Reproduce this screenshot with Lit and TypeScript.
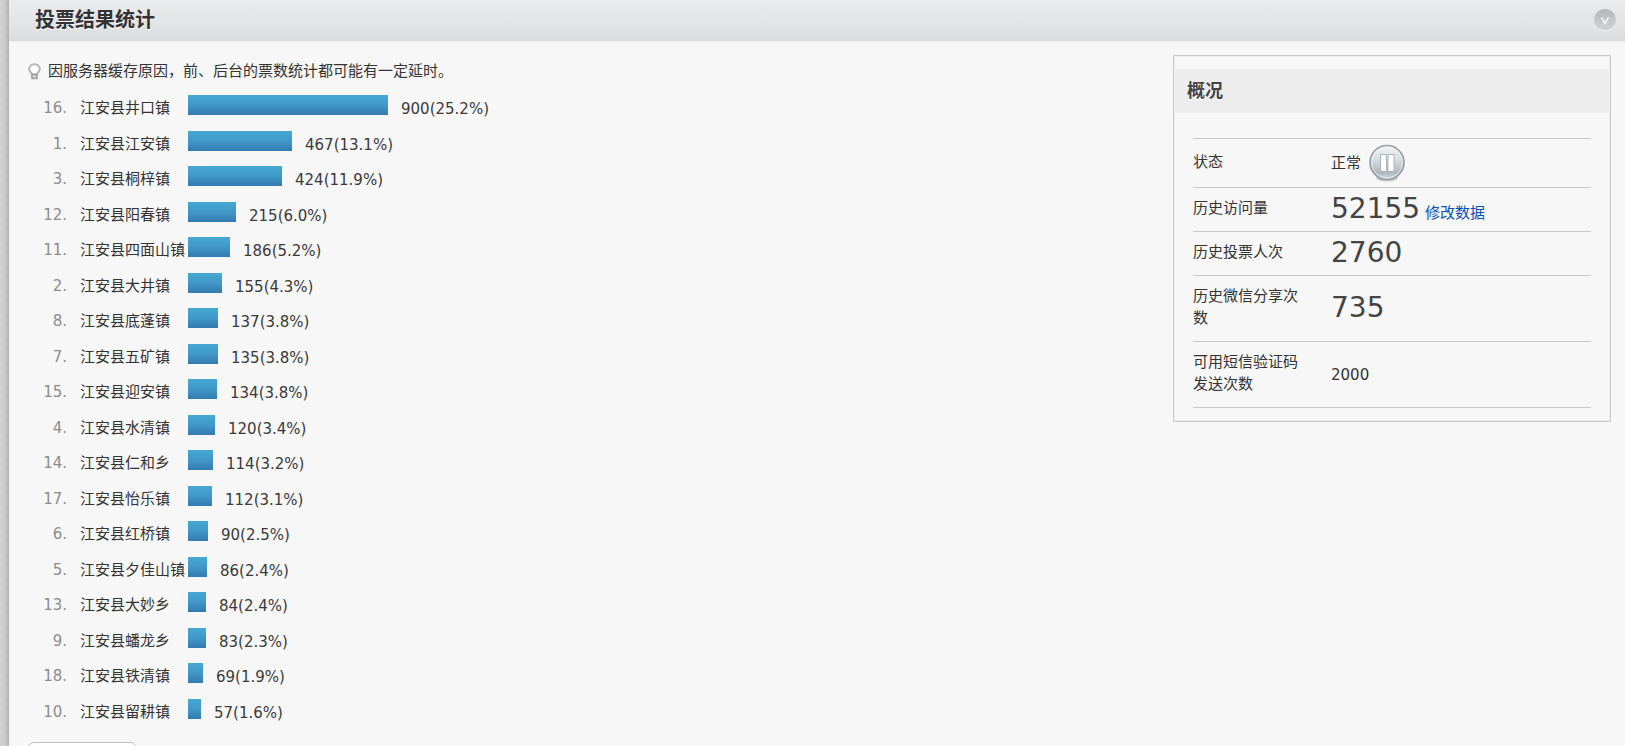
import { LitElement, html, css } from "lit";
import { customElement } from "lit/decorators.js";

interface Entry {
  id: number;
  name: string;
  votes: number;
  percent: string;
  width: number;
}

const entry = (id: number, name: string, votes: number, percent: string, width: number): Entry => ({
  id,
  name,
  votes,
  percent,
  width,
});

const ENTRIES: Entry[] = [
  entry(16, "江安县井口镇", 900, "25.2", 200),
  entry(1, "江安县江安镇", 467, "13.1", 104),
  entry(3, "江安县桐梓镇", 424, "11.9", 94),
  entry(12, "江安县阳春镇", 215, "6.0", 48),
  entry(11, "江安县四面山镇", 186, "5.2", 42),
  entry(2, "江安县大井镇", 155, "4.3", 34),
  entry(8, "江安县底蓬镇", 137, "3.8", 30),
  entry(7, "江安县五矿镇", 135, "3.8", 30),
  entry(15, "江安县迎安镇", 134, "3.8", 29),
  entry(4, "江安县水清镇", 120, "3.4", 27),
  entry(14, "江安县仁和乡", 114, "3.2", 25),
  entry(17, "江安县怡乐镇", 112, "3.1", 24),
  entry(6, "江安县红桥镇", 90, "2.5", 20),
  entry(5, "江安县夕佳山镇", 86, "2.4", 19),
  entry(13, "江安县大妙乡", 84, "2.4", 18),
  entry(9, "江安县蟠龙乡", 83, "2.3", 18),
  entry(18, "江安县铁清镇", 69, "1.9", 15),
  entry(10, "江安县留耕镇", 57, "1.6", 13),
];

@customElement("vote-chart")
class VoteChart extends LitElement {
  static styles = css`
    :host {
      display: block;
    }
    .list {
      list-style: none;
      margin: 0;
      padding: 0;
    }
    .row {
      display: grid;
      grid-template-columns: 52px 108px 1fr;
      align-items: start;
      height: 36px;
    }
    .row:nth-child(even) {
      height: 35px;
    }
    .rank,
    .name {
      line-height: 26px;
      white-space: nowrap;
    }
    .rank {
      padding-right: 13px;
      color: #8c8c8c;
      text-align: right;
    }
    .name {
      color: #333;
    }
    .track {
      display: flex;
      gap: 13px;
    }
    .bar {
      flex: none;
      height: 20px;
      background: linear-gradient(#45a9d3, #4198c8 50%, #337ab0);
    }
    .value {
      line-height: 28px;
      color: #3a3a3a;
    }
  `;

  render() {
    return html`
      <ol class="list">
        ${ENTRIES.map(
          (e) => html`
            <li class="row">
              <span class="rank">${e.id}.</span>
              <span class="name">${e.name}</span>
              <span class="track">
                <span class="bar" style="width: ${e.width}px"></span>
                <span class="value">${e.votes}(${e.percent}%)</span>
              </span>
            </li>
          `,
        )}
      </ol>
    `;
  }
}

@customElement("overview-panel")
class OverviewPanel extends LitElement {
  static styles = css`
    :host {
      display: block;
    }
    .panel {
      border: 1px solid #c8c8c8;
      box-shadow: inset 0 0 0 1px #f0f0f0;
      padding: 13px 1px;
    }
    .title {
      margin: 0;
      padding: 8px 12px;
      background: #ededed;
      color: #444;
      font-size: 18px;
      line-height: 28px;
      font-weight: bold;
      text-shadow: 0 1px 0 #fff;
    }
    .table {
      width: calc(100% - 36px);
      margin: 25px 18px 0;
      border-collapse: collapse;
      table-layout: fixed;
    }
    .label,
    .data {
      box-sizing: border-box;
      border-top: 1px solid #c8c8c8;
      border-bottom: 1px solid #c8c8c8;
      padding: 0;
      vertical-align: middle;
      text-align: left;
      font-weight: normal;
    }
    .label {
      width: 135px;
      padding-right: 26px;
      padding-bottom: 3px;
      line-height: 22px;
      color: #333;
    }
    .data {
      padding-left: 3px;
      color: #333;
    }
    .tall {
      height: 66px;
    }
    .mid {
      height: 49px;
    }
    .short {
      height: 44px;
    }
    .status {
      display: flex;
      align-items: center;
      gap: 7px;
    }
    .figure {
      display: flex;
      align-items: baseline;
      gap: 5px;
      padding-bottom: 2px;
      font-size: 28px;
      line-height: 32px;
      color: #444;
    }
    .link {
      font-size: 15px;
      line-height: 16px;
      color: #0a50b8;
      text-decoration: none;
    }
    .pause {
      display: block;
      width: 38px;
      height: 38px;
      padding: 0;
      border: 0;
      background: none;
      cursor: pointer;
    }
    .icon {
      display: block;
    }
  `;

  render() {
    return html`
      <section class="panel">
        <h2 class="title">概况</h2>
        <table class="table">
          <tbody>
            <tr class="mid">
              <th class="label" scope="row">状态</th>
              <td class="data">
                <div class="status">
                  <span>正常</span>
                  <button class="pause" type="button" aria-label="暂停">
                    <svg class="icon" width="38" height="38" viewBox="0 0 38 38">
                      <defs>
                        <linearGradient id="disc" x1="0" y1="0" x2="0" y2="1">
                          <stop offset="0" stop-color="#f3f6f7" />
                          <stop offset="0.45" stop-color="#d3dade" />
                          <stop offset="0.8" stop-color="#adb9bf" />
                          <stop offset="1" stop-color="#d5dde0" />
                        </linearGradient>
                      </defs>
                      <ellipse cx="19" cy="34" rx="11" ry="3.5" fill="#c4c8ca" />
                      <circle cx="19" cy="18.5" r="17" fill="url(#disc)" stroke="#949ca2" stroke-width="1.6" />
                      <circle cx="19" cy="18.5" r="15.6" fill="none" stroke="#eef2f3" stroke-opacity="0.7" />
                      <rect x="12.5" y="10.5" width="6" height="17" fill="#fff" stroke="#abb4ba" />
                      <rect x="20" y="10.5" width="6" height="17" fill="#fff" stroke="#abb4ba" />
                    </svg>
                  </button>
                </div>
              </td>
            </tr>
            <tr class="short">
              <th class="label" scope="row">历史访问量</th>
              <td class="data">
                <div class="figure">52155<a class="link" href="#edit">修改数据</a></div>
              </td>
            </tr>
            <tr class="short">
              <th class="label" scope="row">历史投票人次</th>
              <td class="data"><div class="figure">2760</div></td>
            </tr>
            <tr class="tall">
              <th class="label" scope="row">历史微信分享次数</th>
              <td class="data"><div class="figure">735</div></td>
            </tr>
            <tr class="tall">
              <th class="label" scope="row">可用短信验证码发送次数</th>
              <td class="data">2000</td>
            </tr>
          </tbody>
        </table>
      </section>
    `;
  }
}

@customElement("app-root")
class AppRoot extends LitElement {
  static styles = css`
    :host {
      display: flex;
      height: 100vh;
      overflow: hidden;
      font-family: "DejaVu Sans", "Noto Sans CJK SC", sans-serif;
      font-size: 15px;
      line-height: 22px;
      color: #333;
      background: #f7f7f7;
    }
    .edge {
      flex: none;
      width: 9px;
      height: 100%;
    }
    .page {
      flex: 1;
      min-width: 0;
    }
    .head {
      display: flex;
      align-items: center;
      justify-content: space-between;
      height: 41px;
      padding: 0 8px 0 26px;
      border-bottom: 1px solid #ebecee;
      background: linear-gradient(#ebecee, #e2e3e5 60%, #dadbdd);
    }
    .heading {
      margin: 0;
      padding-bottom: 2px;
      font-size: 20px;
      line-height: 28px;
      font-weight: bold;
      color: #333;
      text-shadow: 0 1px 0 #fff;
    }
    .toggle {
      padding: 0 0 2px;
      border: 0;
      background: none;
      cursor: pointer;
    }
    .icon {
      display: block;
      flex: none;
    }
    .body {
      display: flex;
      justify-content: space-between;
      align-items: flex-start;
      padding: 13px 14px 0 19px;
    }
    .main {
      flex: 1;
      min-width: 0;
    }
    .side {
      flex: none;
      width: 438px;
    }
    .tip {
      display: flex;
      align-items: center;
      gap: 7px;
      margin: 5px 0 13px;
    }
    .action {
      display: block;
      width: 108px;
      height: 34px;
      margin-top: 8px;
      border: 1px solid #c0c0c0;
      border-radius: 6px;
      background: linear-gradient(#fff, #eee);
    }
  `;

  render() {
    return html`
      <svg class="edge" aria-hidden="true">
        <defs>
          <pattern id="hex" width="14" height="24" patternUnits="userSpaceOnUse">
            <path d="M0 4 7 0 14 4V12L7 16 0 12ZM7 16V24" fill="none" stroke="#dadada" stroke-width="1" />
          </pattern>
          <linearGradient id="shade">
            <stop offset="0" stop-color="#000" stop-opacity="0" />
            <stop offset="0.5" stop-color="#000" stop-opacity="0.03" />
            <stop offset="1" stop-color="#000" stop-opacity="0.16" />
          </linearGradient>
        </defs>
        <rect width="9" height="100%" fill="#d1d1d1" />
        <rect width="9" height="100%" fill="url(#hex)" />
        <rect width="9" height="100%" fill="url(#shade)" />
      </svg>
      <main class="page">
        <header class="head">
          <h1 class="heading">投票结果统计</h1>
          <button class="toggle" type="button" aria-label="收起">
            <svg class="icon" width="24" height="24" viewBox="0 0 24 24">
              <defs>
                <linearGradient id="knob" x1="0" y1="0" x2="0" y2="1">
                  <stop offset="0" stop-color="#b4b6b9" />
                  <stop offset="1" stop-color="#d2d3d5" />
                </linearGradient>
              </defs>
              <circle cx="12" cy="12.5" r="11" fill="#f0f0f1" />
              <circle cx="12" cy="11.7" r="10.8" fill="url(#knob)" />
              <path d="M8.5 9.5 12 15.5 15.5 9.5" fill="none" stroke="#f4f4f5" stroke-width="1.6" />
            </svg>
          </button>
        </header>
        <div class="body">
          <div class="main">
            <p class="tip">
              <svg class="icon" width="13" height="17" viewBox="0 0 13 17" aria-hidden="true">
                <path
                  d="M4 11.5C3.8 9.7 1.2 8.9 1.2 6.1A5.3 4.9 0 0 1 11.8 6.1C11.8 8.9 9.2 9.7 9 11.5Z"
                  fill="#fff"
                  stroke="#b4b4b4"
                  stroke-width="2"
                />
                <path d="M4 11.5V15.5H9V11.5Z" fill="#d8d8d8" stroke="#999" stroke-width="1.5" />
              </svg>
              <span>因服务器缓存原因，前、后台的票数统计都可能有一定延时。</span>
            </p>
            <vote-chart></vote-chart>
            <button class="action" type="button" aria-label="操作"></button>
          </div>
          <overview-panel class="side"></overview-panel>
        </div>
      </main>
    `;
  }
}
